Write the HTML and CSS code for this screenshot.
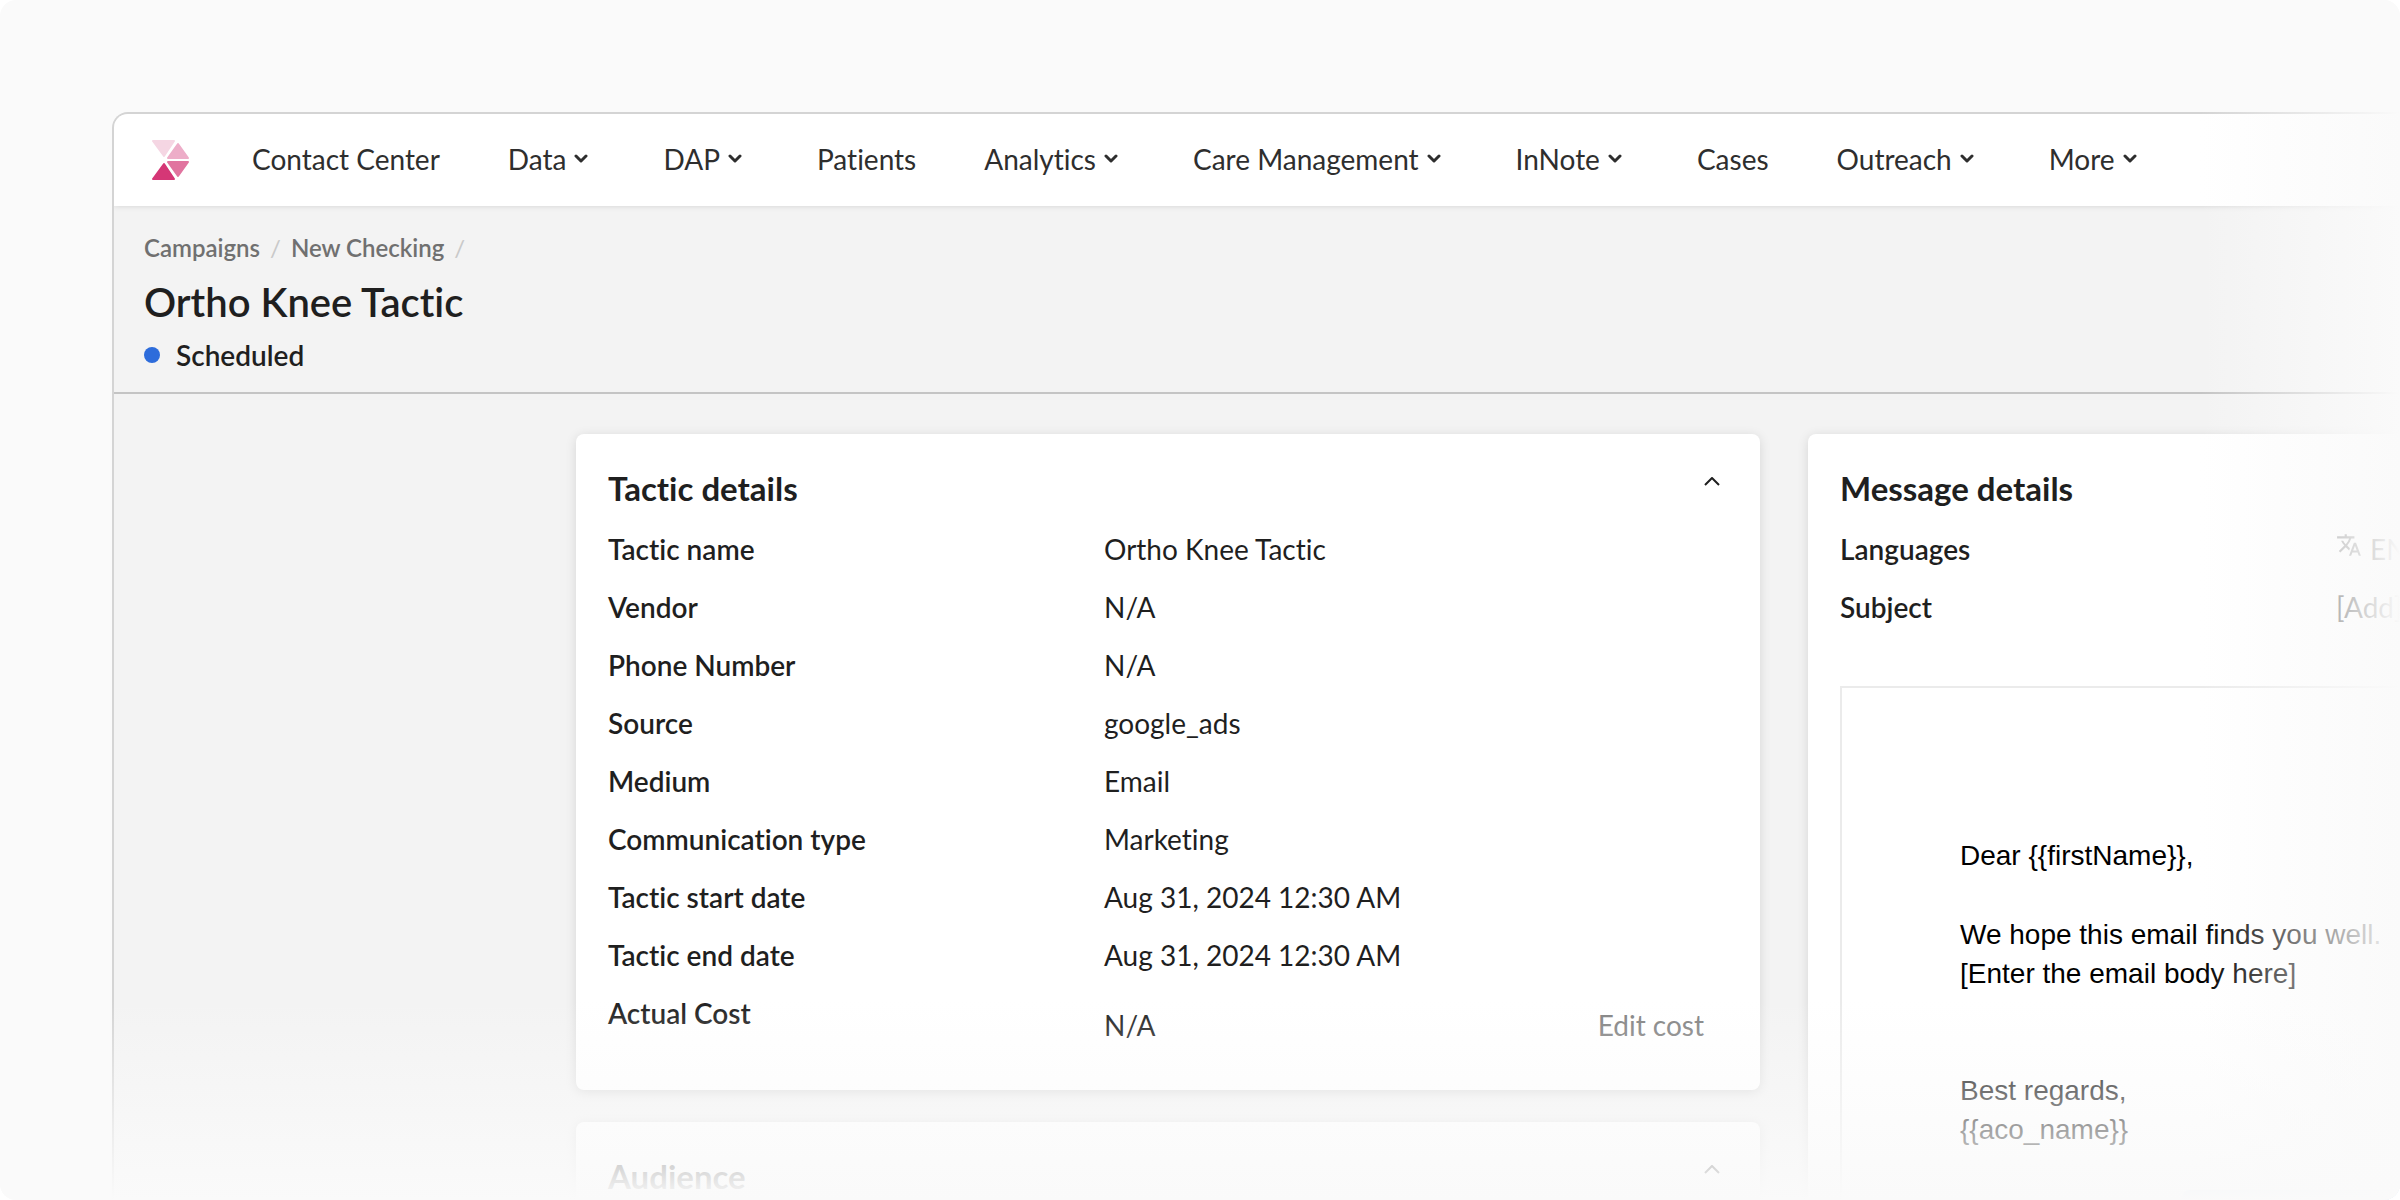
FILE: index.html
```
<!DOCTYPE html>
<html lang="en">
<head>
<meta charset="utf-8">
<title>Ortho Knee Tactic</title>
<link rel="stylesheet" href="styles.css">
</head>
<body>
<div class="stage">
  <div class="window">
    <header class="topbar">
      <a class="logo" href="#" aria-label="Home">
        <svg width="38" height="42" viewBox="0 0 38 42" stroke-width="2" stroke-linejoin="round" aria-hidden="true">
          <path d="M1 2H22L12 17Z" fill="#f5d6e3" stroke="#f5d6e3"/>
          <path d="M26 5L36 19H16Z" fill="#edadc8" stroke="#edadc8"/>
          <path d="M16 23H36L26 37Z" fill="#e1749f" stroke="#e1749f"/>
          <path d="M12 25L22 40H1Z" fill="#d53776" stroke="#d53776"/>
        </svg>
      </a>
      <nav class="nav" aria-label="Main">
        <a class="nav-item" href="#">Contact Center</a>
        <button class="nav-item nav-menu" type="button">Data<svg class="caret" viewBox="0 0 14 10" aria-hidden="true"><path d="M2 2L7 7L12 2"/></svg></button>
        <button class="nav-item nav-menu" type="button">DAP<svg class="caret" viewBox="0 0 14 10" aria-hidden="true"><path d="M2 2L7 7L12 2"/></svg></button>
        <a class="nav-item" href="#">Patients</a>
        <button class="nav-item nav-menu" type="button">Analytics<svg class="caret" viewBox="0 0 14 10" aria-hidden="true"><path d="M2 2L7 7L12 2"/></svg></button>
        <button class="nav-item nav-menu" type="button">Care Management<svg class="caret" viewBox="0 0 14 10" aria-hidden="true"><path d="M2 2L7 7L12 2"/></svg></button>
        <button class="nav-item nav-menu" type="button">InNote<svg class="caret" viewBox="0 0 14 10" aria-hidden="true"><path d="M2 2L7 7L12 2"/></svg></button>
        <a class="nav-item" href="#">Cases</a>
        <button class="nav-item nav-menu" type="button">Outreach<svg class="caret" viewBox="0 0 14 10" aria-hidden="true"><path d="M2 2L7 7L12 2"/></svg></button>
        <button class="nav-item nav-menu" type="button">More<svg class="caret" viewBox="0 0 14 10" aria-hidden="true"><path d="M2 2L7 7L12 2"/></svg></button>
      </nav>
    </header>

    <section class="page-head">
      <nav class="crumbs" aria-label="Breadcrumb">
        <a class="crumb" href="#">Campaigns</a><span class="slash">/</span>
        <a class="crumb" href="#">New Checking</a><span class="slash">/</span>
      </nav>
      <h1 class="page-title">Ortho Knee Tactic</h1>
      <p class="status"><span class="status-dot"></span>Scheduled</p>
    </section>

    <main class="board">
      <div class="column">
        <section class="card">
          <div class="card-head">
            <h2 class="card-title">Tactic details</h2>
            <button class="collapse" type="button" aria-label="Collapse tactic details"><svg width="16" height="10" viewBox="0 0 16 10" aria-hidden="true"><path d="M1 8L8 1L15 8"/></svg></button>
          </div>
          <dl class="details">
            <dt>Tactic name</dt><dd>Ortho Knee Tactic</dd>
            <dt>Vendor</dt><dd>N/A</dd>
            <dt>Phone Number</dt><dd>N/A</dd>
            <dt>Source</dt><dd>google_ads</dd>
            <dt>Medium</dt><dd>Email</dd>
            <dt>Communication type</dt><dd>Marketing</dd>
            <dt>Tactic start date</dt><dd>Aug 31, 2024 12:30 AM</dd>
            <dt>Tactic end date</dt><dd>Aug 31, 2024 12:30 AM</dd>
            <dt>Actual Cost</dt><dd class="cost">N/A<button class="edit" type="button">Edit cost</button></dd>
          </dl>
        </section>
        <section class="card">
          <div class="card-head">
            <h2 class="card-title">Audience</h2>
            <button class="collapse" type="button" aria-label="Collapse audience"><svg width="16" height="10" viewBox="0 0 16 10" aria-hidden="true"><path d="M1 8L8 1L15 8"/></svg></button>
          </div>
        </section>
      </div>

      <section class="card card-message">
        <div class="card-head">
          <h2 class="card-title">Message details</h2>
        </div>
        <dl class="details">
          <dt>Languages</dt>
          <dd class="language"><svg class="translate" width="26" height="26" viewBox="0 0 24 24" aria-hidden="true"><path d="M12.87 15.07l-2.54-2.51.03-.03A17.52 17.52 0 0 0 14.07 6H17V4h-7V2H8v2H1v2h11.17C11.5 7.92 10.44 9.75 9 11.35 8.07 10.32 7.3 9.19 6.69 8h-2c.73 1.63 1.73 3.17 2.98 4.56l-5.09 5.02L4 19l5-5 3.11 3.11.76-2.04zM18.5 10h-2L12 22h2l1.12-3h4.75L21 22h2l-4.5-12zm-2.62 7l1.62-4.33L19.12 17h-3.24z"/></svg>EN</dd>
          <dt>Subject</dt><dd>[Add]</dd>
        </dl>
        <div class="email">
          <p>Dear {{firstName}},</p>
          <p>We hope this email finds you well.<br>[Enter the email body here]</p>
          <p class="sign-off">Best regards,<br>{{aco_name}}</p>
          <div class="banner"></div>
        </div>
      </section>
    </main>
  </div>
</div>
</body>
</html>
```
FILE: styles.css
```
* {
  box-sizing: border-box;
}

body {
  margin: 0;
  background: #fff;
  color: #1f1f1f;
  font: 400 28px/38px Lato, sans-serif;
  font-variant-ligatures: none;
}

button {
  padding: 0;
  border: 0;
  background: none;
  color: inherit;
  font: inherit;
  font-variant-ligatures: none;
}

a {
  color: inherit;
  text-decoration: none;
}

h1, h2, p, dl, dd {
  margin: 0;
}

.stage {
  position: relative;
  display: flex;
  height: 100vh;
  padding: 112px 0 0 112px;
  overflow: hidden;
  border-radius: 16px;
  background: #fafafa;
}

/* Fade the window out towards the right and bottom edges */
.stage::before,
.stage::after {
  content: "";
  position: absolute;
  z-index: 2;
  right: 0;
  bottom: 0;
  pointer-events: none;
}

.stage::before {
  top: 0;
  width: 200px;
  background: linear-gradient(to right, #fafafa00, #fafafa);
}

.stage::after {
  left: 0;
  height: 200px;
  background: linear-gradient(to bottom, #fafafa00, #fafafa);
}

.window {
  flex: 1;
  min-width: 0;
  overflow: hidden;
  border: 2px solid #d4d4d4;
  border-width: 2px 0 0 2px;
  border-radius: 16px 0 0 0;
  background: #f3f3f3;
}

.topbar {
  display: flex;
  align-items: center;
  gap: 62px;
  height: 92px;
  padding-left: 38px;
  background: #fff;
  box-shadow: 0 0 6px rgba(0, 0, 0, 0.14);
}

.logo svg {
  display: block;
}

.nav {
  display: flex;
  gap: 68px;
  padding-bottom: 2px;
  color: #2e2e2e;
}

.nav-item {
  white-space: nowrap;
}

.nav-menu {
  display: flex;
  align-items: center;
  gap: 8px;
  padding-right: 7px;
}

.caret {
  width: 14px;
  height: 10px;
  fill: none;
  stroke: currentColor;
  stroke-width: 3;
  stroke-linecap: round;
  stroke-linejoin: round;
}

.page-head {
  padding: 26px 30px 18px;
  border-bottom: 2px solid #c4c4c4;
}

.crumbs {
  display: flex;
  gap: 10px;
  color: #707070;
  font-size: 24px;
  font-weight: 600;
  line-height: 32px;
}

.slash {
  color: #c9c9c9;
  font-weight: 400;
}

.page-title {
  margin: 12px 0 8px;
  font-size: 40px;
  font-weight: 600;
  line-height: 52px;
}

.status {
  display: flex;
  align-items: center;
  gap: 16px;
  font-weight: 600;
}

.status-dot {
  width: 16px;
  height: 16px;
  border-radius: 50%;
  background: #2d6cdb;
}

.board {
  display: grid;
  grid-template-columns: 414fr 1184fr 592fr;
  gap: 48px;
  padding-top: 40px;
}

.column {
  grid-column: 2;
  display: flex;
  flex-direction: column;
  gap: 32px;
}

.card {
  min-width: 0;
  min-height: 160px;
  padding: 32px 32px 36px;
  border-radius: 8px;
  background: #fff;
  box-shadow: 0 2px 12px rgba(0, 0, 0, 0.12);
}

.card-message {
  padding-right: 0;
  border-radius: 8px 0 0 0;
}

.card-head {
  display: flex;
  justify-content: space-between;
  align-items: flex-start;
}

.card-title {
  font-size: 33px;
  font-weight: 700;
  line-height: 44px;
}

.collapse {
  display: flex;
  margin: 11px 8px 0 0;
}

.collapse svg {
  fill: none;
  stroke: currentColor;
  stroke-width: 2;
  stroke-linejoin: round;
}

.details {
  display: grid;
  grid-template-columns: 496px 1fr;
  row-gap: 20px;
  margin-top: 20px;
}

.details dt {
  font-weight: 600;
}

.details dd {
  min-width: 0;
  white-space: nowrap;
}

.cost {
  display: flex;
  justify-content: space-between;
  padding: 12px 24px 10px 0;
}

.edit {
  color: #808080;
}

.language {
  display: flex;
  align-items: flex-start;
  gap: 8px;
}

.translate {
  flex: none;
  margin-top: 2px;
  fill: #757575;
}

.email {
  height: 560px;
  margin-top: 60px;
  padding: 148px 0 0 118px;
  border: 2px solid #ebebeb;
  border-width: 2px 0 0 2px;
  color: #000;
  font: 400 28px/39px "Liberation Sans", Arial, sans-serif;
  white-space: nowrap;
}

.email p + p {
  margin-top: 40px;
}

.email p + .sign-off {
  margin-top: 78px;
}

.banner {
  height: 80px;
  margin: 41px 0 0 222px;
  border-radius: 8px 0 0 0;
  background: #cfe0f5;
}
```
